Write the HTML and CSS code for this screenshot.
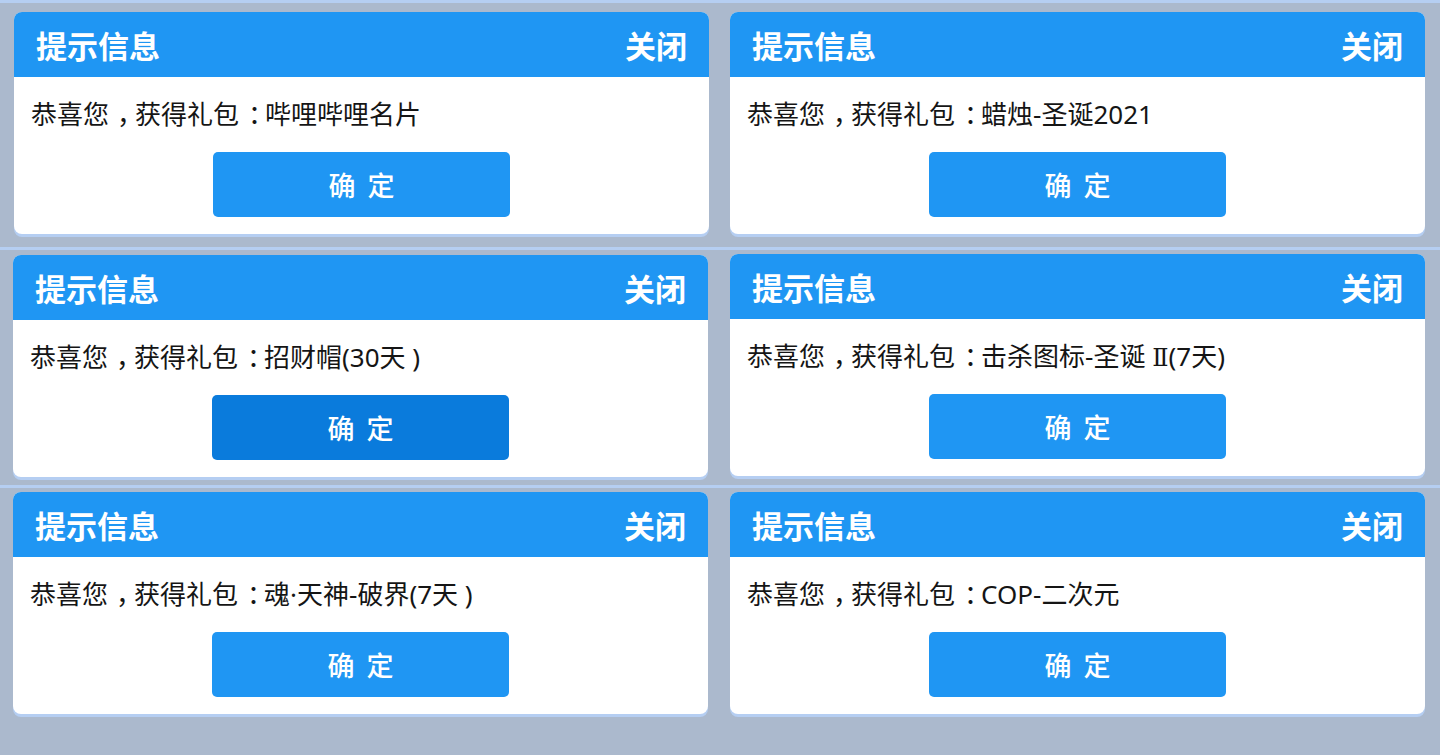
FILE: index.html
```html
<!DOCTYPE html>
<html lang="zh-CN">
<head>
    <meta charset="UTF-8">
    <meta name="viewport" content="width=device-width, initial-scale=1.0">
    <title>提示信息</title>
    <link rel="stylesheet" href="styles.css">
</head>
<body>
    <div class="board">
        <div class="tile row1 left">
            <div class="dialog">
                <div class="dialog-head"><span class="title">提示信息</span><span class="close">关闭</span></div>
                <div class="dialog-body">
                    <p class="msg">恭喜您<span class="punct">，</span>获得礼包<span class="punct colon">：</span>哔哩哔哩名片</p>
                    <button class="ok">确定</button>
                </div>
            </div>
        </div>
        <div class="tile row1 right">
            <div class="dialog">
                <div class="dialog-head"><span class="title">提示信息</span><span class="close">关闭</span></div>
                <div class="dialog-body">
                    <p class="msg">恭喜您<span class="punct">，</span>获得礼包<span class="punct colon">：</span>蜡烛-圣诞2021</p>
                    <button class="ok">确定</button>
                </div>
            </div>
        </div>
        <div class="tile row2 left">
            <div class="dialog">
                <div class="dialog-head"><span class="title">提示信息</span><span class="close">关闭</span></div>
                <div class="dialog-body">
                    <p class="msg">恭喜您<span class="punct">，</span>获得礼包<span class="punct colon">：</span>招财帽(30天 )</p>
                    <button class="ok pressed">确定</button>
                </div>
            </div>
        </div>
        <div class="tile row2 right">
            <div class="dialog">
                <div class="dialog-head"><span class="title">提示信息</span><span class="close">关闭</span></div>
                <div class="dialog-body">
                    <p class="msg">恭喜您<span class="punct">，</span>获得礼包<span class="punct colon">：</span>击杀图标-圣诞 <span class="roman">Ⅱ</span>(7天)</p>
                    <button class="ok">确定</button>
                </div>
            </div>
        </div>
        <div class="tile row3 left">
            <div class="dialog">
                <div class="dialog-head"><span class="title">提示信息</span><span class="close">关闭</span></div>
                <div class="dialog-body">
                    <p class="msg">恭喜您<span class="punct">，</span>获得礼包<span class="punct colon">：</span>魂·天神-破界(7天 )</p>
                    <button class="ok">确定</button>
                </div>
            </div>
        </div>
        <div class="tile row3 right">
            <div class="dialog">
                <div class="dialog-head"><span class="title">提示信息</span><span class="close">关闭</span></div>
                <div class="dialog-body">
                    <p class="msg">恭喜您<span class="punct">，</span>获得礼包<span class="punct colon">：</span>COP-二次元</p>
                    <button class="ok">确定</button>
                </div>
            </div>
        </div>
    </div>
</body>
</html>
```

FILE: styles.css
```css
body {
    margin: 0;
    background-color: #abb9cd;
    font-family: "Noto Sans CJK SC", "Noto Sans", sans-serif;
    overflow: hidden;
}
.board {
    display: grid;
    grid-template-columns: 718px 722px;
    grid-template-rows: 247px 238px 270px;
    height: 755px;
}
.tile {
    border-top: 3px solid #b5cef2;
    box-sizing: border-box;
}
.tile.left {
    padding-left: 14px;
}
.tile.right {
    padding-left: 12px;
}
.row1 {
    padding-top: 9px;
}
.row2 {
    padding-top: 5px;
}
.row2.right {
    padding-top: 4px;
}
.row3 {
    padding-top: 4px;
}
.row2.left, .row3.left {
    padding-left: 13px;
}
.dialog {
    width: 695px;
    height: 222px;
    background-color: #fff;
    border-radius: 8px;
    overflow: hidden;
    box-shadow: 0 3px 0 #b5cef2;
}
.dialog-head {
    height: 65px;
    background-color: #1f96f3;
    display: flex;
    justify-content: space-between;
    align-items: center;
    padding: 0 22px 0 22px;
    color: #fff;
    font-size: 31px;
    font-weight: bold;
}
.dialog-body {
    padding: 0 17px;
}
.msg {
    margin: 0;
    padding-top: 23px;
    height: 26px;
    font-family: "Noto Sans", "Noto Sans CJK SC", sans-serif;
    font-size: 26px;
    line-height: 26px;
    color: #151515;
}
/* centre the full-width comma / colon like the original client font */
.punct {
    font-family: "Noto Sans CJK SC", sans-serif;
    font-feature-settings: "halt";
    padding: 0 5px 0 8px;
}
.punct.colon {
    padding: 0 4px 0 9px;
}
.roman {
    font-family: "DejaVu Serif", "Liberation Serif", serif;
    font-size: 24px;
    line-height: 0;
}
.ok {
    display: block;
    margin: 26px auto 0;
    width: 297px;
    height: 65px;
    border: none;
    border-radius: 5px;
    background-color: #1f96f3;
    color: #fff;
    font-family: "Noto Sans CJK SC", sans-serif;
    font-size: 27px;
    font-weight: 500;
    letter-spacing: 12px;
    padding: 0 0 0 12px;
    cursor: pointer;
}
.ok.pressed {
    background-color: #0a7bdc;
}
```
